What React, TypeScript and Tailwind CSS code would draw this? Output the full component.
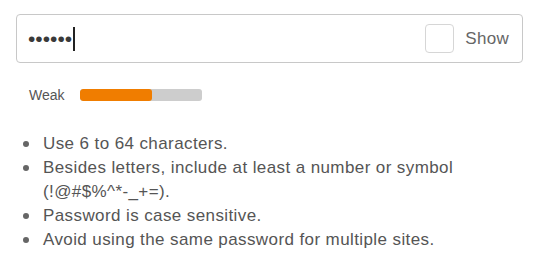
const rules = [
  "Use 6 to 64 characters.",
  "Besides letters, include at least a number or symbol (!@#$%^*-_+=).",
  "Password is case sensitive.",
  "Avoid using the same password for multiple sites.",
];

export default function App() {
  return (
    <div className="w-[534px] h-[261px] bg-white pl-4 pr-[11px] pt-[14px] font-['Liberation_Sans',Arial,sans-serif] text-[#555]">
      <div className="flex h-[49px] items-center rounded-[4px] border border-[#c8c8c8] pl-[11px] pr-[13px]">
        <div className="flex flex-1 items-center">
          <span className="text-[21px] leading-none tracking-[0px] text-[#3a3a3a]">••••••</span>
          <span className="ml-[1px] h-[24px] w-[2px] bg-[#222]" />
        </div>
        <span className="h-[29px] w-[29px] rounded-[4px] border border-[#d6d6d6] bg-white" />
        <span className="ml-[11px] text-[17px] tracking-[0.3px] text-[#666]">Show</span>
      </div>

      <div className="mt-[20px] flex h-[24px] items-center pl-[13px]">
        <span className="text-[14px] text-[#555]">Weak</span>
        <div className="ml-[15px] h-[12px] w-[122px] overflow-hidden rounded-[3px] bg-[#cdcdcd]">
          <div className="h-full w-[72px] rounded-[3px] bg-[#f07d00]" />
        </div>
      </div>

      <ul className="mt-[25px] text-[17px] leading-[24px] tracking-[0.4px] text-[#555]">
        {rules.map((r) => (
          <li key={r} className="flex items-start pl-[7px]">
            <span className="mt-[9px] h-[6px] w-[6px] shrink-0 rounded-full bg-[#666]" />
            <span className="ml-[14px] max-w-[420px]">{r}</span>
          </li>
        ))}
      </ul>
    </div>
  );
}
